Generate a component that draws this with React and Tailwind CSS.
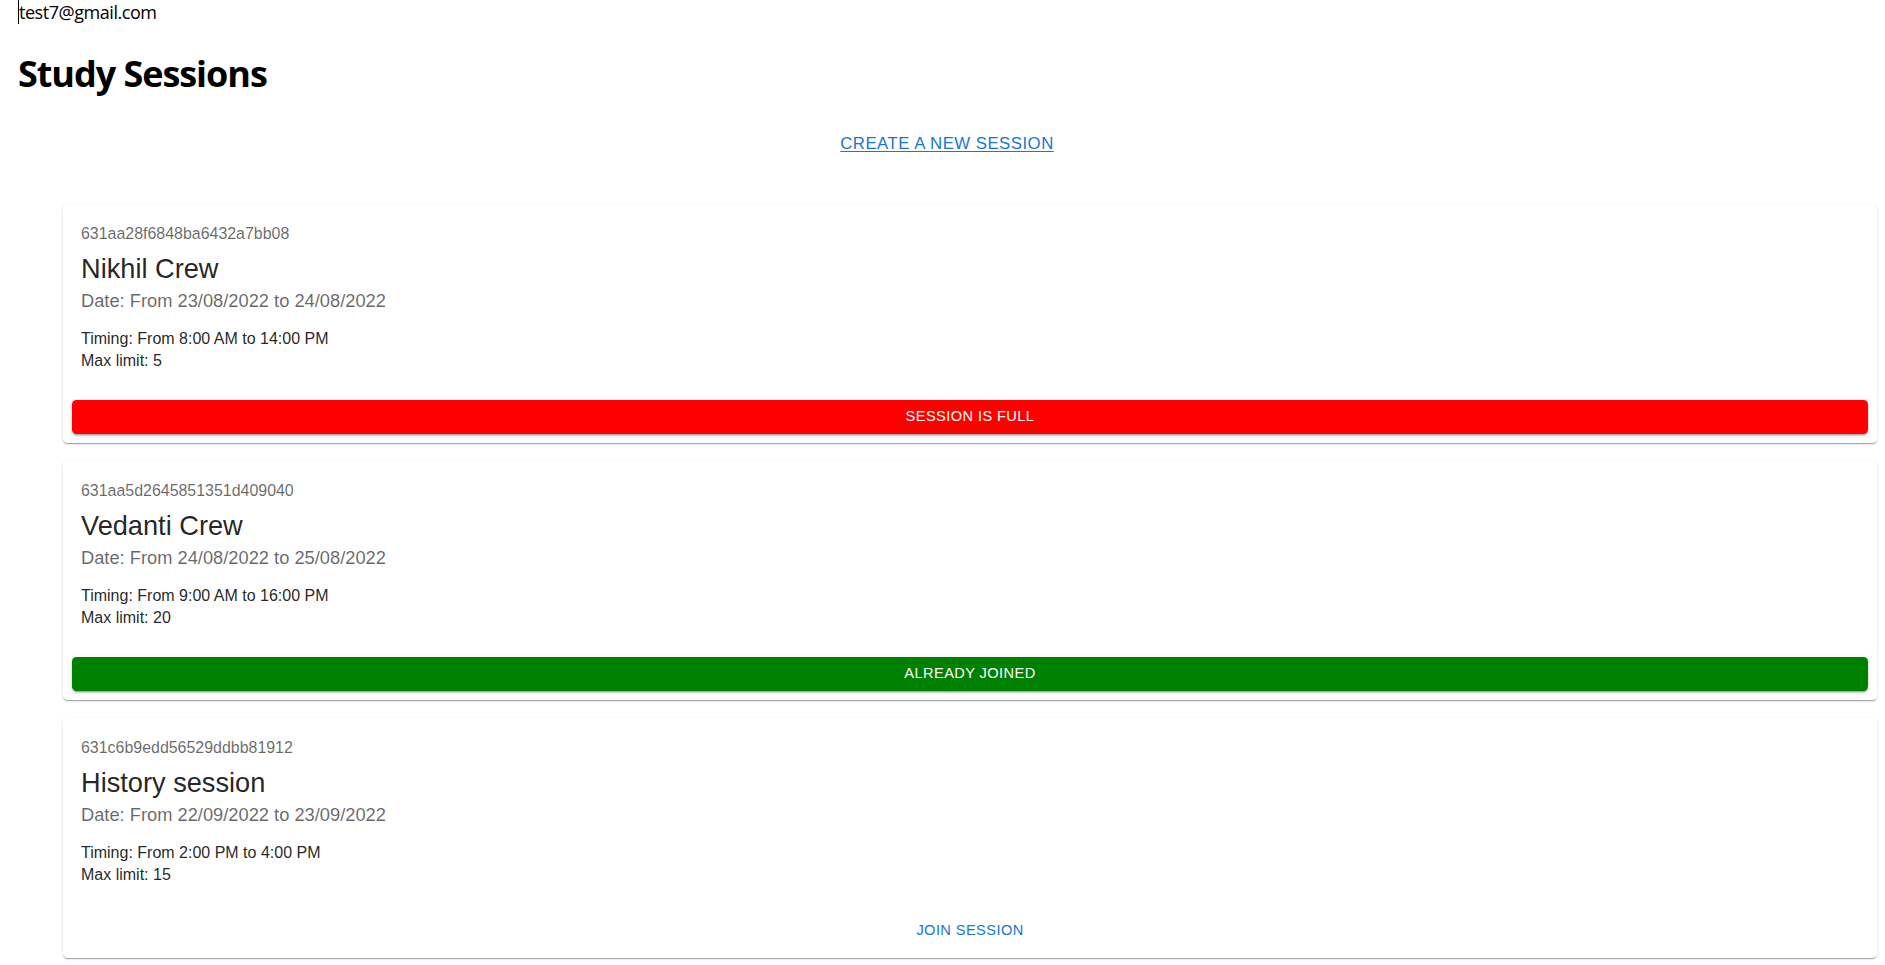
import React from "react";

const sessions = [
  {
    id: "631aa28f6848ba6432a7bb08",
    name: "Nikhil Crew",
    date: "Date: From 23/08/2022 to 24/08/2022",
    timing: "Timing: From 8:00 AM to 14:00 PM",
    max: "Max limit: 5",
    status: "full",
  },
  {
    id: "631aa5d2645851351d409040",
    name: "Vedanti Crew",
    date: "Date: From 24/08/2022 to 25/08/2022",
    timing: "Timing: From 9:00 AM to 16:00 PM",
    max: "Max limit: 20",
    status: "joined",
  },
  {
    id: "631c6b9edd56529ddbb81912",
    name: "History session",
    date: "Date: From 22/09/2022 to 23/09/2022",
    timing: "Timing: From 2:00 PM to 4:00 PM",
    max: "Max limit: 15",
    status: "join",
  },
];

function ActionButton({ status }) {
  if (status === "full") {
    return (
      <button className="block w-full h-[34.6px] rounded-[4.5px] bg-[#ff0000] text-white text-[14.6px] tracking-[0.42px] uppercase shadow-[0px_3px_1px_-2px_rgba(0,0,0,0.2),0px_2px_2px_0px_rgba(0,0,0,0.14),0px_1px_5px_0px_rgba(0,0,0,0.12)]">
        Session is full
      </button>
    );
  }
  if (status === "joined") {
    return (
      <button className="block w-full h-[34.6px] rounded-[4.5px] bg-[#008000] text-white text-[14.6px] tracking-[0.42px] uppercase shadow-[0px_3px_1px_-2px_rgba(0,0,0,0.2),0px_2px_2px_0px_rgba(0,0,0,0.14),0px_1px_5px_0px_rgba(0,0,0,0.12)]">
        Already joined
      </button>
    );
  }
  return (
    <button className="block w-full h-[34.6px] rounded-[4.5px] bg-transparent text-[#1976d2] text-[14.6px] tracking-[0.42px] uppercase">
      Join session
    </button>
  );
}

function SessionCard({ s }) {
  return (
    <div className="bg-white rounded-[4.5px] shadow-[0px_2px_1px_-1px_rgba(0,0,0,0.2),0px_1px_1px_0px_rgba(0,0,0,0.14),0px_1px_3px_0px_rgba(0,0,0,0.12)]">
      <div className="px-[18px] pt-[18px] pb-[18px]">
        <div className="text-[15.95px] leading-[23.6px] text-black/60 mb-[5.5px]">{s.id}</div>
        <div className="text-[27.2px] leading-[36px] text-black/[0.87]">{s.name}</div>
        <div className="text-[18.3px] leading-[27px] text-black/60 mb-[13.5px]">{s.date}</div>
        <div className="text-[16px] leading-[22.5px] text-black/[0.87]">
          {s.timing}
          <br />
          {s.max}
        </div>
      </div>
      <div className="p-[9px]">
        <ActionButton status={s.status} />
      </div>
    </div>
  );
}

export default function App() {
  return (
    <div className="bg-white min-h-screen text-black">
      <div className="font-['Open_Sans','Noto_Sans',sans-serif]">
        <div className="h-6 pl-[18px] flex items-start">
          <span className="inline-block w-px h-6 bg-black"></span>
          <span className="text-[18px] leading-6 tracking-[-0.45px]">test7@gmail.com</span>
        </div>
        <h1 className="mt-[26px] mb-[22px] pl-[18px] text-[36px] leading-[48px] font-bold tracking-[-1.05px]">Study Sessions</h1>
      </div>
      <div className="font-['Liberation_Sans',Arial,sans-serif]">
        <div className="h-[84px] pt-[12px] pl-[9px] flex justify-center items-start">
          <a href="#" className="text-[16.8px] leading-6 tracking-[0.48px] uppercase text-[#1976d2] underline underline-offset-[2px]">
            Create a new session
          </a>
        </div>
        <div className="pl-[63px] pr-[8px] flex flex-col gap-[18px] pb-4">
          {sessions.map((s) => (
            <SessionCard key={s.id} s={s} />
          ))}
        </div>
      </div>
    </div>
  );
}
